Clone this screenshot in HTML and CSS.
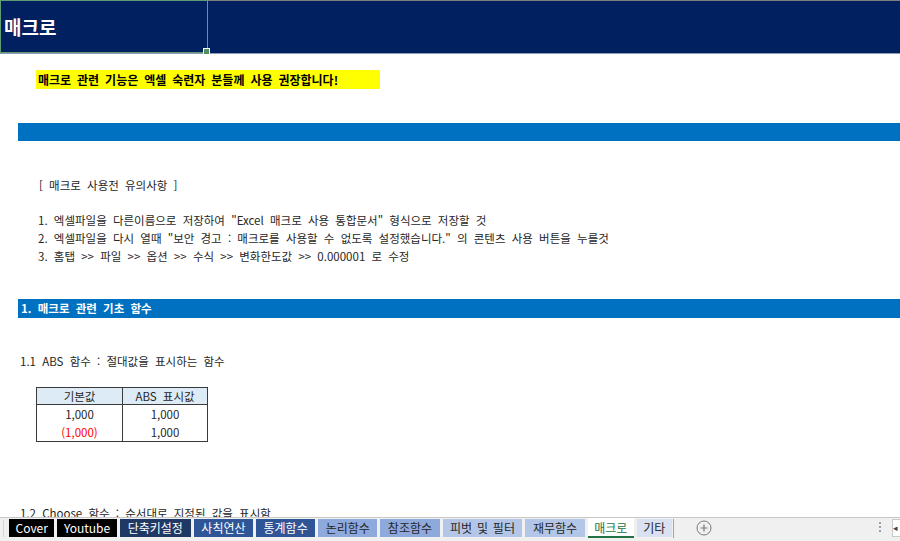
FILE: index.html
```html
<!DOCTYPE html>
<html lang="ko">
<head>
    <meta charset="UTF-8">
    <title>매크로</title>
    <link rel="stylesheet" href="styles.css">
</head>
<body>
    <div class="sheet">
        <div class="title-band">
            <div class="title-cell">매크로</div>
        </div>

        <div class="row notice-row">
            <span class="notice">매크로 관련 기능은 엑셀 숙련자 분들께 사용 권장합니다!</span>
        </div>

        <div class="bar blank-bar"></div>

        <div class="row caution-head">[ 매크로 사용전 유의사항 ]</div>
        <div class="caution-list">
            <div class="row">1. 엑셀파일을 다른이름으로 저장하여 "Excel 매크로 사용 통합문서" 형식으로 저장할 것</div>
            <div class="row">2. 엑셀파일을 다시 열때 "보안 경고 : 매크로를 사용할 수 없도록 설정했습니다." 의 콘텐츠 사용 버튼을 누를것</div>
            <div class="row">3. 홈탭 &gt;&gt; 파일 &gt;&gt; 옵션 &gt;&gt; 수식 &gt;&gt; 변화한도값 &gt;&gt; 0.000001 로 수정</div>
        </div>

        <div class="bar section-bar">1. 매크로 관련 기초 함수</div>

        <div class="row sub-title">1.1 ABS 함수 : 절대값을 표시하는 함수</div>

        <table class="data-table">
            <thead>
                <tr><th>기본값</th><th>ABS 표시값</th></tr>
            </thead>
            <tbody>
                <tr><td>1,000</td><td>1,000</td></tr>
                <tr><td class="neg">(1,000)</td><td>1,000</td></tr>
            </tbody>
        </table>

        <div class="row sub-title next-title">1.2 Choose 함수 : 순서대로 지정된 값을 표시함</div>
    </div>

    <div class="tab-bar">
        <div class="tabs">
            <span class="tab tab-black">Cover</span>
            <span class="tab tab-black">Youtube</span>
            <span class="tab tab-navy">단축키설정</span>
            <span class="tab tab-blue">사칙연산</span>
            <span class="tab tab-blue">통계함수</span>
            <span class="tab tab-mid">논리함수</span>
            <span class="tab tab-mid">참조함수</span>
            <span class="tab tab-light">피벗 및 필터</span>
            <span class="tab tab-light">재무함수</span>
            <span class="tab tab-active">매크로</span>
            <span class="tab tab-pale">기타</span>
        </div>
        <span class="add-sheet">
            <svg width="16" height="16" viewBox="0 0 16 16">
                <circle cx="8" cy="8" r="7" fill="none" stroke="#7a7a7a" stroke-width="1"/>
                <path d="M8 4.5v7M4.5 8h7" stroke="#7a7a7a" stroke-width="1.2"/>
            </svg>
        </span>
        <span class="grip"></span>
        <span class="scroll-box">◂</span>
    </div>
</body>
</html>
```

FILE: styles.css
```css
* {
    margin: 0;
    padding: 0;
    box-sizing: border-box;
}

body {
    width: 900px;
    height: 541px;
    overflow: hidden;
    background: #ffffff;
    font-family: "Noto Sans CJK KR", "Noto Sans", sans-serif;
    font-size: 11.5px;
    word-spacing: 3px;
    color: #262626;
}

.sheet {
    height: 517px;
    overflow: hidden;
}

.title-band {
    height: 54px;
    background: #002060;
    border-top: 1px solid #7f7f7f;
    border-bottom: 1px solid #8e9bb8;
}

.title-cell {
    width: 208px;
    height: 53px;
    border: 1px solid #5e9c72;
    color: #ffffff;
    font-size: 19px;
    font-weight: 700;
    line-height: 51px;
    padding-left: 3px;
    position: relative;
    margin-top: -1px;
}

.title-cell::after {
    content: "";
    position: absolute;
    right: -3px;
    bottom: -3px;
    width: 5px;
    height: 5px;
    background: #4f8f61;
    border: 1px solid #fff;
}

.row {
    height: 18px;
    line-height: 18px;
    white-space: nowrap;
}

.notice-row {
    margin-top: 16px;
    padding-left: 36px;
    height: 19px;
}

.notice {
    display: inline-block;
    width: 344px;
    height: 19px;
    line-height: 19px;
    background: #ffff00;
    color: #000;
    font-weight: 700;
    font-size: 12px;
    word-spacing: 2.6px;
    padding-left: 2px;
}

.bar {
    margin-left: 18px;
    background: #0070c0;
}

.blank-bar {
    margin-top: 34px;
    height: 18px;
}

.caution-head {
    margin-top: 35px;
    padding-left: 39px;
}

.caution-list {
    margin-top: 17px;
    padding-left: 38px;
}

.section-bar {
    margin-top: 34px;
    height: 19px;
    line-height: 19px;
    color: #ffffff;
    font-weight: 700;
    padding-left: 3px;
}

.sub-title {
    margin-top: 34px;
    padding-left: 20px;
}

.data-table {
    margin: 17px 0 0 36px;
    border-collapse: collapse;
    border: 1px solid #3a3a3a;
    width: 172px;
    text-align: center;
    font-size: 11.5px;
}

.data-table th {
    background: #ddebf7;
    font-weight: 400;
    height: 17px;
    line-height: 16px;
    border-bottom: 1px solid #3a3a3a;
}

.data-table th,
.data-table td {
    border-right: 1px solid #3a3a3a;
    padding: 0;
}

.data-table th:first-child,
.data-table td:first-child {
    width: 86px;
}

.data-table td {
    height: 18px;
    line-height: 18px;
}

.data-table .neg {
    color: #ff0000;
}

.next-title {
    margin-top: 62px;
}

.tab-bar {
    height: 24px;
    background: #f0f0f0;
    border-top: 1px solid #c8c8c8;
    display: flex;
    align-items: flex-start;
    padding-left: 9px;
    position: relative;
}

.tab-bar::before {
    content: "";
    position: absolute;
    left: 3px;
    top: 2px;
    width: 1px;
    height: 17px;
    background: #d4d4d4;
}

.tabs {
    display: flex;
    gap: 3px;
    margin-top: 1px;
    border-right: 1px solid #a6a6a6;
    padding-right: 1px;
}

.tab {
    height: 18px;
    line-height: 18px;
    padding: 0 7.5px;
    font-size: 12px;
    word-spacing: 1.5px;
    color: #262626;
    white-space: nowrap;
}

.tab-black {
    background: #000000;
    color: #ffffff;
    padding: 0 6.5px;
}

.tab-navy {
    background: #203864;
    color: #ffffff;
    padding: 0 8px;
}

.tab-blue {
    background: #2f5597;
    color: #ffffff;
}

.tab-mid {
    background: #8ea9db;
}

.tab-light {
    background: #b4c6e7;
}

.tab-active {
    background: #ffffff;
    color: #217346;
    border-bottom: 2px solid #217346;
    height: 20px;
    margin-top: -1px;
    line-height: 19px;
    padding: 0 6.5px;
}

.tab-pale {
    background: #d9e1f2;
    padding: 0 6.5px;
}

.add-sheet {
    margin: 2px 0 0 22px;
}

.grip {
    margin: 4px 0 0 auto;
    width: 2px;
    height: 12px;
    background: repeating-linear-gradient(#a0a0a0 0 2px, transparent 2px 4px);
}

.scroll-box {
    margin: 1px 0 0 11px;
    width: 8px;
    height: 18px;
    background: #fff;
    border: 1px solid #c8c8c8;
    border-right: none;
    font-size: 9px;
    line-height: 16px;
    color: #444;
    overflow: hidden;
}
```
